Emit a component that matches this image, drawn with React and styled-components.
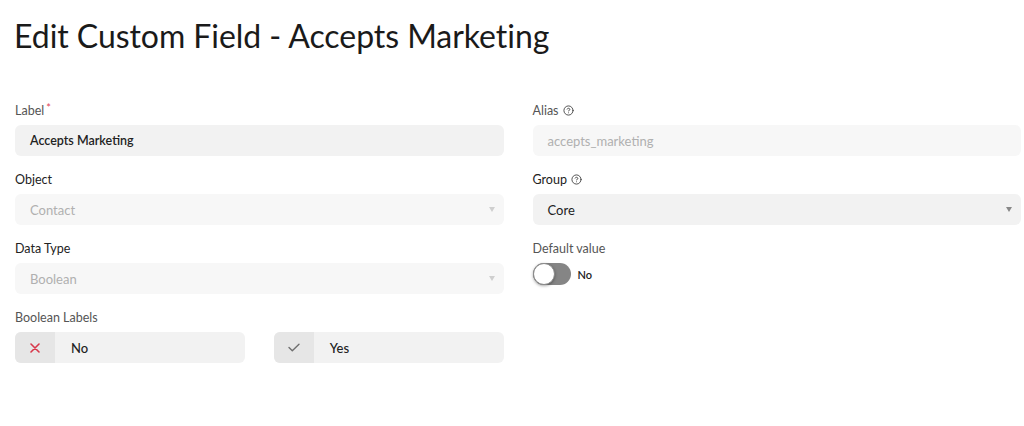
import React from "react";
import styled, { createGlobalStyle } from "styled-components";

const Global = createGlobalStyle`
  html, body { margin: 0; padding: 0; background: #fff; }
  body { font-family: "Lato", "Noto Sans", sans-serif; color: #222; }
  * { box-sizing: border-box; }
`;

const Page = styled.div`
  width: 1024px;
  height: 426px;
  padding: 0 3px 0 15px;
  overflow: hidden;
`;

const Title = styled.h1`
  margin: 0 0 0 -1px;
  padding: 17px 0 0 0;
  height: 101px;
  font-size: 32px;
  line-height: 38px;
  font-weight: 400;
  color: #1a1a1a;
  letter-spacing: -0.05px;
`;

const Grid = styled.div`
  display: grid;
  grid-template-columns: 1fr 1fr;
  column-gap: 29px;
  align-items: start;
`;

const Column = styled.div`
  display: flex;
  flex-direction: column;
`;

const Field = styled.div`
  display: flex;
  flex-direction: column;
  margin-bottom: 14px;
`;

const Label = styled.div`
  display: flex;
  align-items: center;
  gap: 4px;
  height: 18px;
  margin-bottom: 6px;
  font-size: 12.5px;
  color: ${(p) => (p.$strong ? "#222" : "#555")};
`;

const Req = styled.span`
  color: #e0475a;
  font-size: 11px;
  align-self: flex-start;
  margin-left: -2px;
`;

const Help = styled.svg`
  width: 11px;
  height: 11px;
  color: #444;
`;

const Input = styled.div`
  display: flex;
  align-items: center;
  height: 31px;
  padding: 0 9px 0 15px;
  border-radius: 6px;
  background: ${(p) => (p.$disabled ? "#f7f7f7" : "#f2f2f2")};
  font-size: ${(p) => (p.$bold ? "12.5px" : "13px")};
  font-weight: ${(p) => (p.$bold ? 600 : 400)};
  color: ${(p) => (p.$disabled ? "#b0b0b0" : "#222")};
  justify-content: space-between;
`;

const Caret = styled.span`
  width: 0;
  height: 0;
  border-left: 3.5px solid transparent;
  border-right: 3.5px solid transparent;
  border-top: 5px solid ${(p) => (p.$light ? "#cfcfcf" : "#888")};
`;

const BoolRow = styled.div`
  display: grid;
  grid-template-columns: 1fr 1fr;
  column-gap: 29px;
`;

const BoolBox = styled.div`
  display: flex;
  height: 31px;
  border-radius: 6px;
  overflow: hidden;
  background: #f2f2f2;
`;

const BoolIcon = styled.div`
  width: 40px;
  display: flex;
  align-items: center;
  justify-content: center;
  background: #e6e6e6;
`;

const BoolText = styled.div`
  display: flex;
  align-items: center;
  padding-left: 16px;
  font-size: 13px;
  font-weight: 500;
  color: #222;
`;

const ToggleRow = styled.div`
  display: flex;
  align-items: center;
  gap: 7px;
`;

const Track = styled.div`
  position: relative;
  width: 38px;
  height: 22px;
  border-radius: 11px;
  background: #858585;
`;

const Knob = styled.div`
  position: absolute;
  left: 0;
  top: 0;
  width: 22px;
  height: 22px;
  border-radius: 50%;
  background: #fff;
  border: 1px solid #8a8a8a;
  box-shadow: 0 1px 3px rgba(0, 0, 0, 0.35);
`;

const ToggleText = styled.span`
  font-size: 11px;
  font-weight: 600;
  color: #222;
`;

const HelpIcon = () => (
  <Help viewBox="0 0 24 24" fill="none" stroke="currentColor" strokeWidth="2" strokeLinecap="round" strokeLinejoin="round">
    <circle cx="12" cy="12" r="10" />
    <path d="M9.1 9a3 3 0 0 1 5.8 1c0 2-3 3-3 3" />
    <path d="M12 17h.01" />
  </Help>
);

export default function App() {
  return (
    <>
      <Global />
      <Page>
        <Title>Edit Custom Field - Accepts Marketing</Title>
        <Grid>
          <Column>
            <Field>
              <Label>
                Label<Req>*</Req>
              </Label>
              <Input $bold>Accepts Marketing</Input>
            </Field>
            <Field>
              <Label $strong>Object</Label>
              <Input $disabled>
                Contact
                <Caret $light />
              </Input>
            </Field>
            <Field>
              <Label $strong>Data Type</Label>
              <Input $disabled>
                Boolean
                <Caret $light />
              </Input>
            </Field>
            <Field>
              <Label>Boolean Labels</Label>
              <BoolRow>
                <BoolBox>
                  <BoolIcon>
                    <svg width="10" height="10" viewBox="0 0 10 10">
                      <path d="M1 1L9 9M9 1L1 9" stroke="#d8374a" strokeWidth="1.6" strokeLinecap="round" />
                    </svg>
                  </BoolIcon>
                  <BoolText>No</BoolText>
                </BoolBox>
                <BoolBox>
                  <BoolIcon>
                    <svg width="12" height="9" viewBox="0 0 12 9">
                      <path d="M1 4.5L4.3 7.8L11 1.2" fill="none" stroke="#6f6f6f" strokeWidth="1.4" strokeLinecap="round" strokeLinejoin="round" />
                    </svg>
                  </BoolIcon>
                  <BoolText>Yes</BoolText>
                </BoolBox>
              </BoolRow>
            </Field>
          </Column>
          <Column>
            <Field>
              <Label>
                Alias <HelpIcon />
              </Label>
              <Input $disabled>accepts_marketing</Input>
            </Field>
            <Field>
              <Label $strong>
                Group <HelpIcon />
              </Label>
              <Input>
                Core
                <Caret />
              </Input>
            </Field>
            <Field>
              <Label>Default value</Label>
              <ToggleRow>
                <Track>
                  <Knob />
                </Track>
                <ToggleText>No</ToggleText>
              </ToggleRow>
            </Field>
          </Column>
        </Grid>
      </Page>
    </>
  );
}
